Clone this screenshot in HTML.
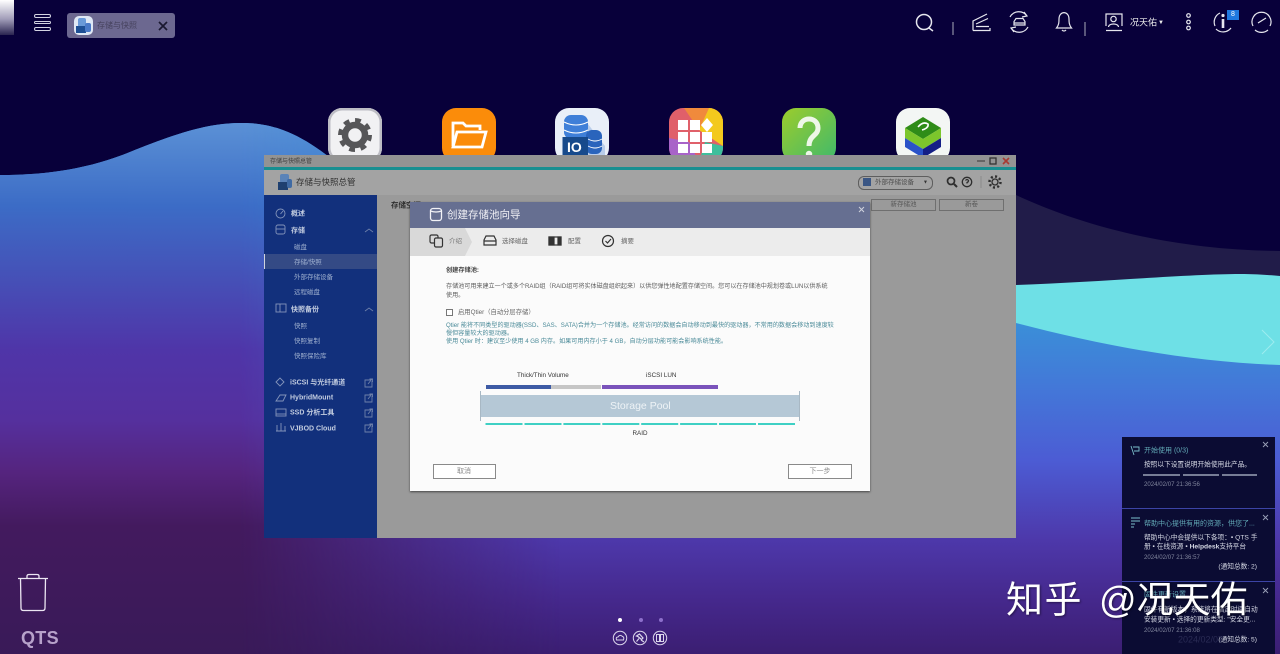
<!DOCTYPE html>
<html lang="zh-CN"><head><meta charset="utf-8"><title>QTS</title>
<style>
html,body{margin:0;padding:0;width:1280px;height:654px;overflow:hidden;background:#08003a}
#r{position:relative;width:1280px;height:654px;overflow:hidden;font-family:"Liberation Sans","Noto Sans CJK SC",sans-serif;filter:blur(.35px)}
.a{position:absolute}
.t{position:absolute;white-space:nowrap;transform:translateY(calc(-50% + 1px));line-height:1}
svg{position:absolute;overflow:visible}
.app{position:absolute;top:108px;width:54px;height:54px;border-radius:14px;overflow:hidden}
.s{color:#9fb0cf;font-size:6.5px}
.m{color:#c3cde0;font-size:7px;font-weight:bold}
.d{color:#4a8a98;font-size:6.1px}
.n{color:#d5d8e4;font-size:6.7px}
.nt{color:#62a9b6;font-size:7px}
.nd{color:#80859c;font-size:6.1px}
.btn{position:absolute;box-sizing:border-box;border:1px solid #8a8a8a;background:#fff;color:#8a8a8a;font-size:7px;text-align:center;line-height:13px}
</style></head><body><div id="r">
<svg width="1280" height="654" style="left:0;top:0">
<defs>
<linearGradient id="bg" gradientUnits="userSpaceOnUse" x1="0" y1="120" x2="0" y2="654">
<stop offset="0" stop-color="#5c92d6"/><stop offset=".16" stop-color="#3c6cc6"/><stop offset=".43" stop-color="#4f35a8"/><stop offset=".56" stop-color="#55309e"/><stop offset=".66" stop-color="#55247e"/><stop offset=".76" stop-color="#431a5e"/><stop offset="1" stop-color="#391a58"/>
</linearGradient>
<linearGradient id="bgr" gradientUnits="userSpaceOnUse" x1="0" y1="320" x2="0" y2="654">
<stop offset="0" stop-color="#3a90d8"/><stop offset=".2" stop-color="#4378d8"/><stop offset=".42" stop-color="#4c5cd4"/><stop offset=".66" stop-color="#4d38aa"/><stop offset=".84" stop-color="#45288c"/><stop offset="1" stop-color="#3b1e72"/>
</linearGradient>
<linearGradient id="hz" gradientUnits="userSpaceOnUse" x1="240" y1="0" x2="560" y2="0"><stop offset="0" stop-color="#fff"/><stop offset="1" stop-color="#000"/></linearGradient>
<mask id="mk" maskUnits="userSpaceOnUse" x="0" y="0" width="1280" height="654"><rect width="1280" height="654" fill="url(#hz)"/></mask>
<clipPath id="wv"><path d="M0 175C50 175 90 168 130 152C170 136 205 123 240 123C280 122 310 140 345 170L1016 300L1016 654L0 654Z"/></clipPath>
<linearGradient id="cor" x1="0" y1="0" x2="0" y2="1"><stop offset="0" stop-color="#fff"/><stop offset=".55" stop-color="#a09cb8"/><stop offset="1" stop-color="#2a2450"/></linearGradient>
</defs>
<rect width="1280" height="654" fill="#08003a"/>
<path d="M1016 195C1080 225 1170 250 1280 251L1280 300L1016 300Z" fill="#211c49"/>
<rect x="345" y="300" width="935" height="354" fill="url(#bgr)"/>
<g clip-path="url(#wv)"><rect width="1100" height="654" fill="url(#bgr)"/><rect width="1100" height="654" fill="url(#bg)" mask="url(#mk)"/></g>
<path d="M1000 285L1016 285C1100 282 1190 274 1240 274C1255 274 1270 275 1280 276L1280 365C1190 362 1100 345 1016 323L1000 320Z" fill="#6ee0e6"/>
<path d="M1262 330L1274 342L1262 354" fill="none" stroke="#9cecef" stroke-width="1"/>
<rect x="0" y="0" width="14" height="35" fill="url(#cor)"/>
</svg>

<!-- top left -->
<div class="a" style="left:34px;top:14px;width:15px;height:1.500px;border:1px solid #d4d4e2;border-radius:2px"></div>
<div class="a" style="left:34px;top:20.500px;width:15px;height:1.500px;border:1px solid #d4d4e2;border-radius:2px"></div>
<div class="a" style="left:34px;top:27px;width:15px;height:1.500px;border:1px solid #d4d4e2;border-radius:2px"></div>
<div class="a" style="left:67px;top:13px;width:108px;height:25px;background:#6c6890;border-radius:3px"></div>
<div class="a" style="left:74px;top:16px;width:19px;height:19px;background:#dfe8f5;border-radius:5px;overflow:hidden">
<div class="a" style="left:4px;top:2px;width:8px;height:9px;background:#6a9ad8;border-radius:2px"></div>
<div class="a" style="left:2px;top:10px;width:10px;height:7px;background:#1d4f94"></div>
<div class="a" style="left:11px;top:7px;width:6px;height:9px;background:#4a7ac8;border-radius:2px"></div></div>
<div class="t" style="left:97px;top:25px;font-size:8px;color:#46425e">存储与快照</div>
<svg width="10" height="10" style="left:158px;top:21px"><path d="M1 1L9 9M9 1L1 9" stroke="#1a1830" stroke-width="1.7"/></svg>

<!-- top right -->
<svg width="380" height="40" style="left:900px;top:0" fill="none" stroke="#e6e6ee" stroke-width="1.2">
<circle cx="24" cy="22" r="7.500" stroke-width="1.500"/><path d="M29 28L33 31" stroke-width="1.500"/>
<path d="M53 22V35M185 22V36" stroke="#8f8fa5"/>
<path d="M73 30.500H90V28M73 30.500V21L87 14M76 26.500H89M76 24L88 18.500" />
<path d="M110 17A10 10 0 0 1 127 16M128 27A10 10 0 0 1 111 28M124 12L127 16L122 17M114 32L111 28L116 27"/>
<path d="M114 25V21.500L116 18.500H123L125 21.500V25ZM114 23H125"/>
<path d="M156.500 28H171.500C169 25 169 22 169 19C169 10.500 159 10.500 159 19C159 22 159 25 156.500 28ZM162 30A2.500 2.500 0 0 0 166 30"/>
<path d="M206 26V14H222V26M206 30.500H222"/><circle cx="213.500" cy="19" r="2.700"/><path d="M208.500 27C208.500 23 218.500 23 218.500 27"/>
<circle cx="288.500" cy="15.500" r="1.800"/><circle cx="288.500" cy="22" r="1.800"/><circle cx="288.500" cy="28" r="1.800"/>
<path d="M315 26A10 10 0 0 1 320 13M331 28A10 10 0 0 1 316 29"/>
<path d="M323 19V28" stroke-width="2.600"/><circle cx="323" cy="15.500" r="1.600" fill="#e6e6ee" stroke="none"/>
<path d="M353 26A9.500 9.500 0 1 1 370 26M355 30A10 10 0 0 0 368 30M358 23L366 18"/>
</svg>
<div class="t" style="left:1130px;top:21.500px;font-size:9px;color:#eee">况天佑</div>
<div class="t" style="left:1158px;top:21.500px;font-size:6px;color:#eee">▼</div>
<div class="a" style="left:1227px;top:10px;width:12px;height:10px;background:#1f78e0;color:#fff;font-size:7px;line-height:10px;text-align:center">8</div>

<!-- desktop icons -->
<div class="app" style="left:328px;background:#f1f1f3;box-shadow:inset 0 0 0 2.500px #bdbdc4">
<svg width="54" height="54" style="left:0;top:0"><circle cx="27" cy="27" r="14.500" fill="none" stroke="#565658" stroke-width="5" stroke-dasharray="5.700 5.680"/><circle cx="27" cy="27" r="10" fill="none" stroke="#565658" stroke-width="6.500"/></svg></div>
<div class="app" style="left:442px;background:#fb8c0a">
<svg width="54" height="54" style="left:0;top:0"><path d="M11 38V15H21L24 18H38V22" fill="none" stroke="#fff" stroke-width="2.800"/><path d="M11 39L15 24H44L40 39Z" fill="none" stroke="#fff" stroke-width="2.800"/></svg></div>
<div class="app" style="left:555px;background:#e9eff8">
<svg width="54" height="54" style="left:0;top:0"><path d="M26 7L50 38V54H26Z" fill="#b9cdea"/><rect x="9" y="7" width="24" height="24" rx="7" fill="#3f7fd8"/><path d="M9 14Q21 20 33 14M9 22Q21 28 33 22" stroke="#fff" fill="none"/><rect x="31" y="22" width="16" height="24" rx="6" fill="#2a64bc"/><path d="M33 31Q40 35 47 31M33 38Q40 42 47 38" stroke="#fff" fill="none"/><rect x="7.500" y="29" width="25.500" height="18" fill="#174a8c"/><text x="12" y="44" font-size="14" font-weight="bold" fill="#fff" font-family="Liberation Sans">IO</text></svg></div>
<div class="app" style="left:669px;background:#e0606a">
<svg width="54" height="54" style="left:0;top:0"><path d="M15 0H40L30 22Z" fill="#f08a3c"/><path d="M40 0H54V38L30 22Z" fill="#f3c91d"/><path d="M54 38V54H30L36 34Z" fill="#3fbf9c"/><path d="M0 30L20 34L30 54H0Z" fill="#a863c8"/></svg>
<svg width="54" height="54" style="left:0;top:0" fill="#fff"><rect x="9" y="12" width="10" height="10"/><rect x="21" y="12" width="10" height="10"/><path d="M38 10L44 17L38 24L32 17Z"/><rect x="9" y="24" width="10" height="10"/><rect x="21" y="24" width="10" height="10"/><rect x="33" y="24" width="10" height="10"/><rect x="9" y="36" width="10" height="9"/><rect x="21" y="36" width="10" height="9"/><rect x="33" y="36" width="10" height="9"/></svg></div>
<div class="app" style="left:782px;background:linear-gradient(135deg,#9ccc2c,#3fb96c)">
<svg width="54" height="54" style="left:0;top:0" fill="none" stroke="#eef7e8" stroke-width="5"><path d="M18 20C18 8 36 8 36 20C36 28 27 27 27 38"/><circle cx="27" cy="46" r="1.500" stroke-width="3.500"/></svg></div>
<div class="app" style="left:896px;background:#f3f6f4">
<svg width="54" height="54" style="left:0;top:0"><path d="M27 9L45 20L27 31L9 20Z" fill="#2f8c18"/><path d="M9 20L27 31L45 20V30L27 41L9 30Z" fill="#7cc62c"/><path d="M9 30L27 41V50L9 39Z" fill="#2a52c8"/><path d="M45 30L27 41V50L45 39Z" fill="#141e86"/><path d="M22 19Q27 13 32 16Q33 20 26 22" stroke="#fff" fill="none" stroke-width="1.600"/></svg></div>

<!-- app window -->
<div class="a" style="left:264px;top:155px;width:752px;height:383px;background:#9a9a9a">
<div class="a" style="left:0;top:0;width:752px;height:12px;background:#939393"></div>
<div class="a" style="left:0;top:12px;width:752px;height:3px;background:#188f91"></div>
<div class="a" style="left:0;top:15px;width:752px;height:25px;background:#a3a3a3"></div>
<div class="a" style="left:0;top:40px;width:113px;height:343px;background:#12307c"></div>
<div class="a" style="left:0;top:99px;width:113px;height:15px;background:#344a85"></div>
<div class="a" style="left:0;top:99px;width:1px;height:15px;background:#d0d4de"></div>
</div>
<div class="t" style="left:270px;top:161px;font-size:6px;color:#3e3e3e">存储与快照总管</div>
<svg width="40" height="10" style="left:976px;top:156px"><path d="M1 5H9" stroke="#555" stroke-width="1.500"/><rect x="14" y="2" width="6" height="6" fill="none" stroke="#333" stroke-width="1.300"/><path d="M27 2L33 8M33 2L27 8" stroke="#a83a32" stroke-width="1.600"/></svg>
<svg width="16" height="16" style="left:277px;top:174px"><rect x="3" y="0" width="9" height="9" rx="2" fill="#5b83b8"/><rect x="1" y="8" width="10" height="8" fill="#1f4070"/><rect x="10" y="5" width="5" height="9" rx="2" fill="#3f6aa4"/></svg>
<div class="t" style="left:296px;top:181px;font-size:8.500px;color:#333">存储与快照总管</div>
<div class="a" style="left:858px;top:176px;width:73px;height:12px;border:1px solid #5e5e5e;border-radius:6px"></div>
<div class="a" style="left:863px;top:178px;width:8px;height:8px;background:#3a5684"></div>
<div class="t" style="left:875px;top:182px;font-size:6.500px;color:#4e4e4e">外部存储设备</div>
<div class="t" style="left:923px;top:182px;font-size:5px;color:#333">▼</div>
<svg width="60" height="18" style="left:945px;top:173px" fill="none" stroke="#2e2e2e" stroke-width="1.300">
<circle cx="6" cy="8" r="3.500" stroke-width="1.700"/><path d="M9 11L12 14" stroke-width="2"/>
<circle cx="22" cy="9" r="4.700"/><path d="M20.500 7.500Q22 5.500 23.500 7.500Q23.500 9 22 9.500V10.500"/>
<path d="M36 3V15" stroke="#8b8b8b" stroke-width="1"/>
<circle cx="50" cy="9" r="3"/><circle cx="50" cy="9" r="5.500" stroke-width="2.500" stroke-dasharray="2 2.300"/>
</svg>
<div class="t" style="left:391px;top:204px;font-size:7.500px;color:#2e2e2e;font-weight:bold">存储空间</div>
<div class="a" style="left:871px;top:199px;width:63px;height:10px;border:1px solid #6f6f6f;color:#585858;font-size:6.500px;line-height:10px;text-align:center">新存储池</div>
<div class="a" style="left:939px;top:199px;width:63px;height:10px;border:1px solid #6f6f6f;color:#585858;font-size:6.500px;line-height:10px;text-align:center">新卷</div>

<!-- sidebar -->
<svg width="24" height="240" style="left:274px;top:206px" fill="none" stroke="#8494ba" stroke-width=".9">
<circle cx="6.500" cy="7.500" r="4.500"/><path d="M6.500 8L9 5"/>
<rect x="2" y="19" width="9" height="9" rx="2"/><path d="M2 23H11"/>
<rect x="2" y="98" width="10" height="8"/><path d="M6 98V106"/>
<path d="M2 176L6 172L10 176L6 180Z"/>
<path d="M2 195L6 189H12L9 195Z"/>
<rect x="2" y="203" width="10" height="7"/><path d="M2 208H12"/>
<path d="M2 225H12M3 225V219M7 225V217M11 225V220"/>
</svg>
<div class="t m" style="left:291px;top:213px">概述</div>
<div class="t m" style="left:291px;top:230px">存储</div>
<div class="t s" style="left:294px;top:247px">磁盘</div>
<div class="t s" style="left:294px;top:262px">存储/快照</div>
<div class="t s" style="left:294px;top:277px">外部存储设备</div>
<div class="t s" style="left:294px;top:292px">远程磁盘</div>
<div class="t m" style="left:291px;top:309px">快照备份</div>
<div class="t s" style="left:294px;top:326px">快照</div>
<div class="t s" style="left:294px;top:341px">快照复制</div>
<div class="t s" style="left:294px;top:356px">快照保险库</div>
<div class="t m" style="left:290px;top:382px">iSCSI 与光纤通道</div>
<div class="t m" style="left:290px;top:397px">HybridMount</div>
<div class="t m" style="left:290px;top:412px">SSD 分析工具</div>
<div class="t m" style="left:290px;top:428px">VJBOD Cloud</div>
<svg width="12" height="240" style="left:363px;top:226px" fill="none" stroke="#6e80aa" stroke-width=".9">
<path d="M2 6L6 3L10 6M2 85L6 82L10 85"/>
<path d="M8 154H2V161H9V155M5 158L9 153M6.500 153H9.500V156"/>
<path d="M8 169H2V176H9V170M5 173L9 168M6.500 168H9.500V171"/>
<path d="M8 184H2V191H9V185M5 188L9 183M6.500 183H9.500V186"/>
<path d="M8 199H2V206H9V200M5 203L9 198M6.500 198H9.500V201"/>
</svg>

<!-- dialog -->
<div class="a" style="left:410px;top:202px;width:460px;height:289px;background:#fbfbfb;box-shadow:0 1px 2px #444">
<div class="a" style="left:0;top:0;width:460px;height:26px;background:#666f91"></div>
<div class="a" style="left:0;top:26px;width:460px;height:28px;background:#ececec"></div>
<svg width="66" height="28" style="left:0;top:26px"><path d="M0 0H55L62 14L55 28H0Z" fill="#d9d9d9"/></svg>
</div>
<svg width="14" height="15" style="left:429px;top:207px" fill="none" stroke="#f2f2f6" stroke-width="1.300"><rect x="1.500" y="1.500" width="11" height="12" rx="2.500"/><path d="M1.500 4Q7 6 12.500 4"/></svg>
<div class="t" style="left:447px;top:214px;font-size:10.500px;color:#f0f0f5">创建存储池向导</div>
<svg width="8" height="8" style="left:858px;top:206px"><path d="M1 1L6 6M6 1L1 6" stroke="#cfd2de" stroke-width="1"/></svg>
<svg width="200" height="16" style="left:428px;top:233px" fill="none" stroke="#333" stroke-width="1.200">
<rect x="2" y="2" width="8" height="8" rx="1.500"/><rect x="6.500" y="5" width="8" height="9" rx="1.500" fill="#d9d9d9"/>
<path d="M56 7L58 3H66L68 7V12H56ZM56 8H68"/>
<rect x="121" y="4" width="12" height="8"/><rect x="121" y="4" width="5" height="8" fill="#333"/><rect x="130" y="4" width="3" height="8" fill="#333"/>
<circle cx="180" cy="8" r="5.500"/><path d="M177.500 8L179.500 10L183 6"/>
</svg>
<div class="t" style="left:449px;top:241px;font-size:6.500px;color:#777">介绍</div>
<div class="t" style="left:502px;top:241px;font-size:6.500px;color:#666">选择磁盘</div>
<div class="t" style="left:568px;top:241px;font-size:6.500px;color:#666">配置</div>
<div class="t" style="left:621px;top:241px;font-size:6.500px;color:#666">摘要</div>
<div class="t" style="left:446px;top:270px;font-size:6.200px;color:#444;font-weight:bold">创建存储池:</div>
<div class="t" style="left:446px;top:286px;font-size:6.080px;color:#5c5c5c">存储池可用来建立一个或多个RAID组（RAID组可将实体磁盘组织起来）以供您弹性地配置存储空间。您可以在存储池中规划卷或LUN以供系统</div>
<div class="t" style="left:446px;top:295px;font-size:6.080px;color:#5c5c5c">使用。</div>
<div class="a" style="left:446px;top:309px;width:5px;height:5px;border:1px solid #777;background:#fff"></div>
<div class="t" style="left:458px;top:312px;font-size:6.300px;color:#666">启用Qtier（自动分层存储）</div>
<div class="t d" style="left:446px;top:325px">Qtier 能将不同类型的驱动器(SSD、SAS、SATA)合并为一个存储池。经常访问的数据会自动移动到最快的驱动器，不常用的数据会移动到速度较</div>
<div class="t d" style="left:446px;top:333px">慢但容量较大的驱动器。</div>
<div class="t d" style="left:446px;top:341px">使用 Qtier 时：建议至少使用 4 GB 内存。如果可用内存小于 4 GB，自动分层功能可能会影响系统性能。</div>

<div class="t" style="left:517px;top:375px;font-size:6.300px;color:#333">Thick/Thin Volume</div>
<div class="t" style="left:646px;top:375px;font-size:6.300px;color:#333">iSCSI LUN</div>
<div class="a" style="left:485.500px;top:385px;width:65px;height:4px;background:#3e5ba5"></div>
<div class="a" style="left:550.500px;top:385px;width:50.500px;height:4px;background:#c6c6c6"></div>
<div class="a" style="left:602px;top:385px;width:115.500px;height:4px;background:#7a53bb"></div>
<div class="a" style="left:480px;top:395px;width:319.500px;height:22px;background:#b5c8d6"></div>
<div class="a" style="left:480px;top:391px;width:1px;height:30px;background:#a8b8c4"></div>
<div class="a" style="left:799px;top:391px;width:1px;height:30px;background:#a8b8c4"></div>
<div class="t" style="left:610px;top:405px;font-size:10.500px;color:#eef3f6">Storage Pool</div>
<svg width="320" height="3" style="left:480px;top:423px"><g fill="#3fd0c4"><rect x="5.500" width="37" height="2"/><rect x="44.500" width="37" height="2"/><rect x="83.400" width="37" height="2"/><rect x="122.300" width="37" height="2"/><rect x="161.200" width="37" height="2"/><rect x="200.100" width="37" height="2"/><rect x="239" width="37" height="2"/><rect x="278" width="37" height="2"/></g></svg>
<div class="t" style="left:632.500px;top:432.500px;font-size:6.300px;color:#333">RAID</div>
<div class="btn" style="left:432.500px;top:464px;width:63px;height:15px">取消</div>
<div class="btn" style="left:788px;top:464px;width:64px;height:15px">下一步</div>

<!-- trash / QTS -->
<svg width="34" height="40" style="left:16px;top:572px" fill="none" stroke="#ece6f2" stroke-width="1.300"><path d="M2 6.500H32M11 6.500V4Q11 2.500 13 2.500H21Q23 2.500 23 4V6.500M4.500 6.500L5 36Q5 38.500 7.500 38.500H26.500Q29 38.500 29 36L29.500 6.500"/></svg>
<div class="t" style="left:21px;top:637px;font-size:18px;font-weight:bold;color:#b7a2ca;letter-spacing:.3px">QTS</div>

<!-- pager -->
<div class="a" style="left:617.500px;top:618px;width:4px;height:4px;border-radius:50%;background:#fff"></div>
<div class="a" style="left:638.500px;top:618px;width:4px;height:4px;border-radius:50%;background:#8d6fcb"></div>
<div class="a" style="left:659px;top:618px;width:4px;height:4px;border-radius:50%;background:#8d6fcb"></div>
<svg width="60" height="18" style="left:610px;top:629px" fill="none" stroke="#dcd6ec" stroke-width="1"><circle cx="10" cy="9" r="6.700"/><circle cx="30" cy="9" r="6.700"/><circle cx="50" cy="9" r="6.700"/><path d="M6.500 11Q5.500 8 8 8Q10 5 12.500 7.500Q14.500 8 13.500 11Z"/><path d="M26.500 7L29.500 5L33 9L31.500 10.500L28 7.500ZM29 9.500L26.500 12.500M31 11L34 13" stroke-width="1.200"/><path d="M46.500 5.500H49.500V12.500H46.500ZM50.500 5.500H53.500V12.500H50.500Z"/></svg>

<!-- notifications -->
<div class="a" style="left:1122px;top:437px;width:153px;height:217px;background:#0b0c33"></div>
<div class="a" style="left:1122px;top:508px;width:153px;height:1px;background:#3c44a6"></div>
<div class="a" style="left:1122px;top:581px;width:153px;height:1px;background:#3c44a6"></div>
<svg width="153" height="217" style="left:1122px;top:437px" fill="none" stroke="#9aa0b8" stroke-width=".9">
<path d="M141 5L146 10M146 5L141 10M141 78L146 83M146 78L141 83M141 151L146 156M146 151L141 156"/>
<path d="M9 9L12 18M11 10H17V14H12" stroke="#7bc0cc"/>
<path d="M9 81H18M9 84H18M9 87H13M12 90H9" stroke="#7bc0cc"/>
<g stroke="none" fill="#777d96"><rect x="21" y="37" width="37" height="2"/><rect x="61" y="37" width="36" height="2"/><rect x="100" y="37" width="35" height="2"/></g>
</svg>
<div class="t nt" style="left:1144px;top:450px">开始使用 (0/3)</div>
<div class="t n" style="left:1144px;top:465px">按照以下设置说明开始使用此产品。</div>
<div class="t nd" style="left:1144px;top:484px">2024/02/07 21:36:56</div>
<div class="t nt" style="left:1144px;top:523px">帮助中心提供有用的资源，供您了...</div>
<div class="t n" style="left:1144px;top:538px">帮助中心中会提供以下各项：• QTS 手</div>
<div class="t n" style="left:1144px;top:547px">册 • 在线资源 • <b>Helpdesk</b>支持平台</div>
<div class="t nd" style="left:1144px;top:557px">2024/02/07 21:36:57</div>
<div class="t n" style="right:23px;top:567px">(通知总数: 2)</div>
<div class="t nt" style="left:1144px;top:594px">固件更新设置</div>
<div class="t n" style="left:1144px;top:610px">固件有新版本，系统将在指定时间自动</div>
<div class="t n" style="left:1144px;top:620px">安装更新 • 选择的更新类型: "安全更...</div>
<div class="t nd" style="left:1144px;top:630px">2024/02/07 21:36:08</div>
<div class="t n" style="right:23px;top:640px">(通知总数: 5)</div>
<div class="t" style="left:1178px;top:639px;font-size:9px;color:#2b2c55">2024/02/07</div>

<!-- watermark -->
<div class="t" style="left:1006px;top:599px;font-size:37px;color:#fff;text-shadow:1px 1px 2px rgba(0,0,0,.45);letter-spacing:1.500px">知乎</div>
<div class="t" style="left:1099px;top:599px;font-size:37px;color:#fff;text-shadow:1px 1px 2px rgba(0,0,0,.45)">@况天佑</div>
</div></body></html>
